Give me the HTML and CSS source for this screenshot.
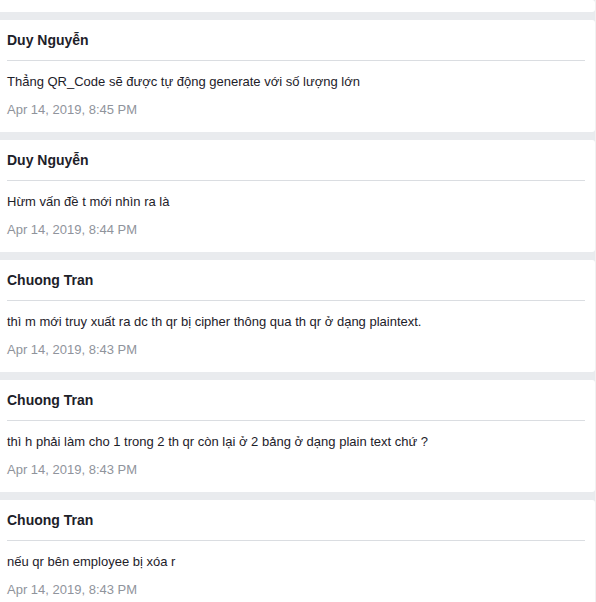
FILE: index.html
```html
<!DOCTYPE html>
<html>
<head>
<meta charset="utf-8">
<link rel="stylesheet" href="styles.css">
</head>
<body>
<div class="feed">
  <div class="card card-tail"></div>
  <div class="card">
    <div class="name">Duy Nguyễn</div>
    <div class="divider"></div>
    <div class="msg">Thẳng QR_Code sẽ được tự động generate với số lượng lớn</div>
    <div class="date">Apr 14, 2019, 8:45 PM</div>
  </div>
  <div class="card">
    <div class="name">Duy Nguyễn</div>
    <div class="divider"></div>
    <div class="msg">Hừm vấn đề t mới nhìn ra là</div>
    <div class="date">Apr 14, 2019, 8:44 PM</div>
  </div>
  <div class="card">
    <div class="name">Chuong Tran</div>
    <div class="divider"></div>
    <div class="msg">thì m mới truy xuất ra dc th qr bị cipher thông qua th qr ở dạng plaintext.</div>
    <div class="date">Apr 14, 2019, 8:43 PM</div>
  </div>
  <div class="card">
    <div class="name">Chuong Tran</div>
    <div class="divider"></div>
    <div class="msg">thì h phải làm cho 1 trong 2 th qr còn lại ở 2 bảng ở dạng plain text chứ ?</div>
    <div class="date">Apr 14, 2019, 8:43 PM</div>
  </div>
  <div class="card">
    <div class="name">Chuong Tran</div>
    <div class="divider"></div>
    <div class="msg">nếu qr bên employee bị xóa r</div>
    <div class="date">Apr 14, 2019, 8:43 PM</div>
  </div>
</div>
</body>
</html>
```
FILE: styles.css
```css
html, body {
  margin: 0;
  padding: 0;
}
body {
  background: #f1f1f1;
  font-family: "Liberation Sans", Arial, sans-serif;
  font-size: 13px;
  line-height: 18px;
  color: #1d2129;
  overflow: hidden;
}
.feed {
  width: 595px;
  background: #e9ebee;
  display: flex;
  flex-direction: column;
  gap: 8px;
  min-height: 602px;
}
.card {
  background: #fff;
  padding: 11px 10px 13px 7px;
  border-radius: 0 3px 3px 0;
}
.card-tail {
  height: 12px;
  padding: 0;
}
.name {
  font-weight: bold;
  font-size: 14px;
}
.divider {
  height: 1px;
  background: #dadde1;
  margin: 11px 0 12px;
}
.msg {
  font-size: 13px;
}
.date {
  margin-top: 10px;
  font-size: 13px;
  color: #90949c;
}
```
